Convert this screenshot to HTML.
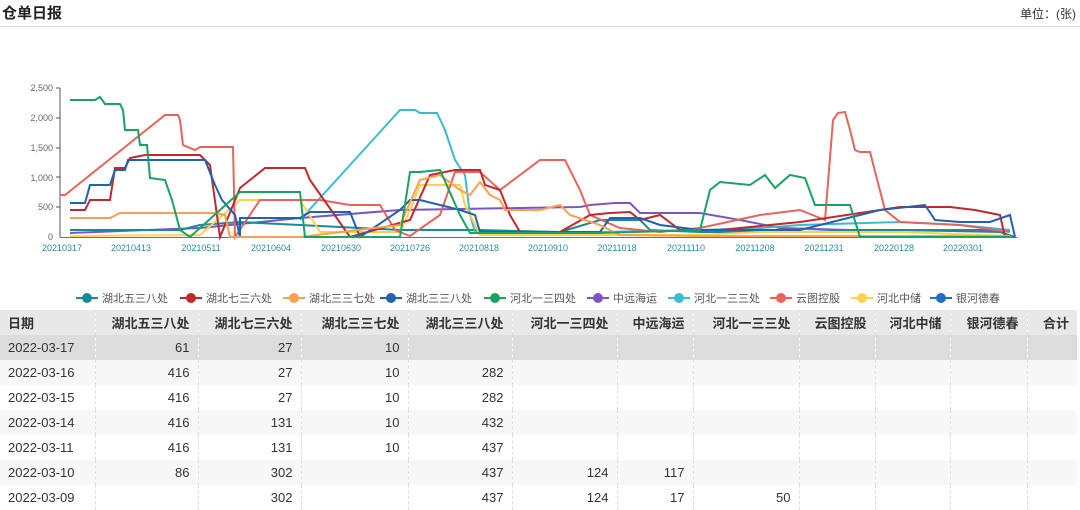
<!DOCTYPE html>
<html><head><meta charset="utf-8"><style>
body{margin:0;width:1080px;height:509px;overflow:hidden;background:#fff;font-family:"Liberation Sans","Noto Sans CJK SC",sans-serif;color:#333;position:relative}
.t{position:absolute;left:2px;top:2px;font-size:15px;font-weight:bold;color:#222}
.u{position:absolute;right:4px;top:5px;font-size:12px;color:#333}
.hr{position:absolute;left:0;top:26px;width:1080px;height:1px;background:#d6d6d6}
svg{position:absolute;left:0;top:0}
table{position:absolute;left:0;top:310px;border-collapse:collapse;font-size:13px;table-layout:fixed;width:1077px}
td,th{height:25px;padding:0 8px 0 8px;text-align:right;border-left:1px dashed #ddd;white-space:nowrap;overflow:hidden;background:#fff}
td:first-child,th:first-child{text-align:left;border-left:none;padding-left:8px}
th{background:#e8e8e8;font-weight:bold;color:#333}
tr.g td{background:#f7f7f7}
tr.h td{background:#dcdcdc}
</style></head><body>
<div class="t">仓单日报</div><div class="u">单位：(张)</div><div class="hr"></div>
<svg width="1080" height="310" font-family="Liberation Sans" font-size="9">
<g fill="#666" text-anchor="end"><text x="53" y="91">2,500</text><text x="53" y="121">2,000</text><text x="53" y="151">1,500</text><text x="53" y="181">1,000</text><text x="53" y="210">500</text><text x="53" y="240">0</text></g>
<path d="M60 88V237M56 88h4M56 118h4M56 148h4M56 177h4M56 207h4" stroke="#555" fill="none"/>
<path d="M60 237.5H1017" stroke="#2a8a8a"/>
<g fill="#2a8a9a" text-anchor="middle">
<text x="62" y="251">20210317</text><text x="131" y="251">20210413</text><text x="201" y="251">20210511</text><text x="271" y="251">20210604</text><text x="341" y="251">20210630</text><text x="410" y="251">20210726</text><text x="479" y="251">20210818</text><text x="548" y="251">20210910</text><text x="617" y="251">20211018</text><text x="686" y="251">20211110</text><text x="755" y="251">20211208</text><text x="824" y="251">20211231</text><text x="894" y="251">20220128</text><text x="963" y="251">20220301</text></g>
<g fill="none" stroke-width="2">
<polyline stroke="#7c55c2" points="70,233 200,228 300,218 400,210 520,208 580,207 590,205 615,203 630,203 640,213 700,213 740,220 780,228 850,230 1010,230"/>
<polyline stroke="#178b9a" points="70,230 180,230 200,225 240,222 300,225 400,230 480,230 560,232 600,220 640,220 650,230 700,232 800,232 900,230 1000,232 1015,237"/>
<polyline stroke="#3bbccc" points="300,220 400,110 415,110 420,113 437,113 445,130 455,160 465,175 470,215 475,232 560,232 600,232 700,230 760,228 800,225 900,222 960,225 1010,230"/>
<polyline stroke="#ffd24a" points="70,236 200,235 240,200 300,200 320,232 400,232 410,210 420,185 460,185 465,205 480,235 600,235 700,235 760,232 900,232 1010,236"/>
<polyline stroke="#e8635a" points="60,195 65,195 165,115 178,115 180,120 183,145 195,150 200,147 233,147 235,237 260,200 320,200 350,205 380,205 395,230 410,236 440,215 455,172 480,172 500,190 540,160 565,160 580,190 590,215 620,228 660,232 700,228 760,215 800,210 825,220 833,120 838,113 845,112 850,130 855,150 860,152 870,152 878,183 885,210 900,222 960,225 1010,232"/>
<polyline stroke="#c0282b" points="70,210 85,210 90,200 110,200 115,168 125,168 130,158 145,155 200,155 210,165 220,237 240,188 265,168 305,168 310,180 350,237 410,220 430,175 455,170 480,170 485,185 500,190 510,215 520,232 560,232 590,215 610,213 630,212 640,220 660,215 680,230 720,230 800,222 900,207 950,207 975,210 1000,215 1005,237"/>
<polyline stroke="#2061b0" points="70,203 85,203 90,185 110,185 115,170 125,170 128,160 205,160 215,185 222,200 235,215 240,237 240,218 300,218 310,212 350,212 360,237 400,210 410,200 420,200 440,205 460,210 475,215 480,232 600,232 610,218 640,218 660,225 700,230 800,230 880,210 925,205 935,220 960,222 990,222 1010,215 1015,237"/>
<polyline stroke="#ff9f4f" points="70,218 110,218 120,213 215,213 225,215 230,237 300,237 400,225 420,180 440,175 460,190 470,195 480,182 490,195 500,200 505,210 540,210 560,205 570,215 600,225 620,235 700,236 1010,236"/>
<polyline stroke="#1aa35f" points="70,100 95,100 100,97 105,104 120,104 123,110 125,130 138,130 140,145 147,145 150,178 165,180 172,200 180,230 190,237 240,192 300,192 305,237 400,237 410,172 420,172 440,170 460,215 470,233 600,233 700,230 710,190 720,182 750,185 765,175 775,188 790,175 805,178 815,205 850,205 860,237 1010,237"/>
</g>
<g stroke-width="2" font-family="Liberation Sans,Noto Sans CJK SC,sans-serif" font-size="11" fill="#555">
<g><path d="M76 298h22" stroke="#178b9a"/><circle cx="87" cy="298" r="5" fill="#178b9a"/><text x="102" y="302">湖北五三八处</text></g>
<g><path d="M180 298h22" stroke="#c0282b"/><circle cx="191" cy="298" r="5" fill="#c0282b"/><text x="206" y="302">湖北七三六处</text></g>
<g><path d="M283 298h22" stroke="#ff9f4f"/><circle cx="294" cy="298" r="5" fill="#ff9f4f"/><text x="309" y="302">湖北三三七处</text></g>
<g><path d="M380 298h22" stroke="#2061b0"/><circle cx="391" cy="298" r="5" fill="#2061b0"/><text x="406" y="302">湖北三三八处</text></g>
<g><path d="M484 298h22" stroke="#1aa35f"/><circle cx="495" cy="298" r="5" fill="#1aa35f"/><text x="510" y="302">河北一三四处</text></g>
<g><path d="M587 298h22" stroke="#7c55c2"/><circle cx="598" cy="298" r="5" fill="#7c55c2"/><text x="613" y="302">中远海运</text></g>
<g><path d="M668 298h22" stroke="#3bbccc"/><circle cx="679" cy="298" r="5" fill="#3bbccc"/><text x="694" y="302">河北一三三处</text></g>
<g><path d="M770 298h22" stroke="#e8635a"/><circle cx="781" cy="298" r="5" fill="#e8635a"/><text x="796" y="302">云图控股</text></g>
<g><path d="M851 298h22" stroke="#ffd24a"/><circle cx="862" cy="298" r="5" fill="#ffd24a"/><text x="877" y="302">河北中储</text></g>
<g><path d="M930 298h22" stroke="#1f6fcf"/><circle cx="941" cy="298" r="5" fill="#1f6fcf"/><text x="956" y="302">银河德春</text></g>
</g></svg>
<table>
<colgroup><col style="width:95px"><col style="width:103px"><col style="width:103px"><col style="width:107px"><col style="width:104px"><col style="width:105px"><col style="width:76px"><col style="width:106px"><col style="width:76px"><col style="width:75px"><col style="width:77px"><col style="width:50px"></colgroup>
<tr><th>日期</th><th>湖北五三八处</th><th>湖北七三六处</th><th>湖北三三七处</th><th>湖北三三八处</th><th>河北一三四处</th><th>中远海运</th><th>河北一三三处</th><th>云图控股</th><th>河北中储</th><th>银河德春</th><th>合计</th></tr>
<tr class="h"><td>2022-03-17</td><td>61</td><td>27</td><td>10</td><td></td><td></td><td></td><td></td><td></td><td></td><td></td><td></td></tr>
<tr class="g"><td>2022-03-16</td><td>416</td><td>27</td><td>10</td><td>282</td><td></td><td></td><td></td><td></td><td></td><td></td><td></td></tr>
<tr><td>2022-03-15</td><td>416</td><td>27</td><td>10</td><td>282</td><td></td><td></td><td></td><td></td><td></td><td></td><td></td></tr>
<tr class="g"><td>2022-03-14</td><td>416</td><td>131</td><td>10</td><td>432</td><td></td><td></td><td></td><td></td><td></td><td></td><td></td></tr>
<tr><td>2022-03-11</td><td>416</td><td>131</td><td>10</td><td>437</td><td></td><td></td><td></td><td></td><td></td><td></td><td></td></tr>
<tr class="g"><td>2022-03-10</td><td>86</td><td>302</td><td></td><td>437</td><td>124</td><td>117</td><td></td><td></td><td></td><td></td><td></td></tr>
<tr><td>2022-03-09</td><td></td><td>302</td><td></td><td>437</td><td>124</td><td>17</td><td>50</td><td></td><td></td><td></td><td></td></tr>
</table>
</body></html>
